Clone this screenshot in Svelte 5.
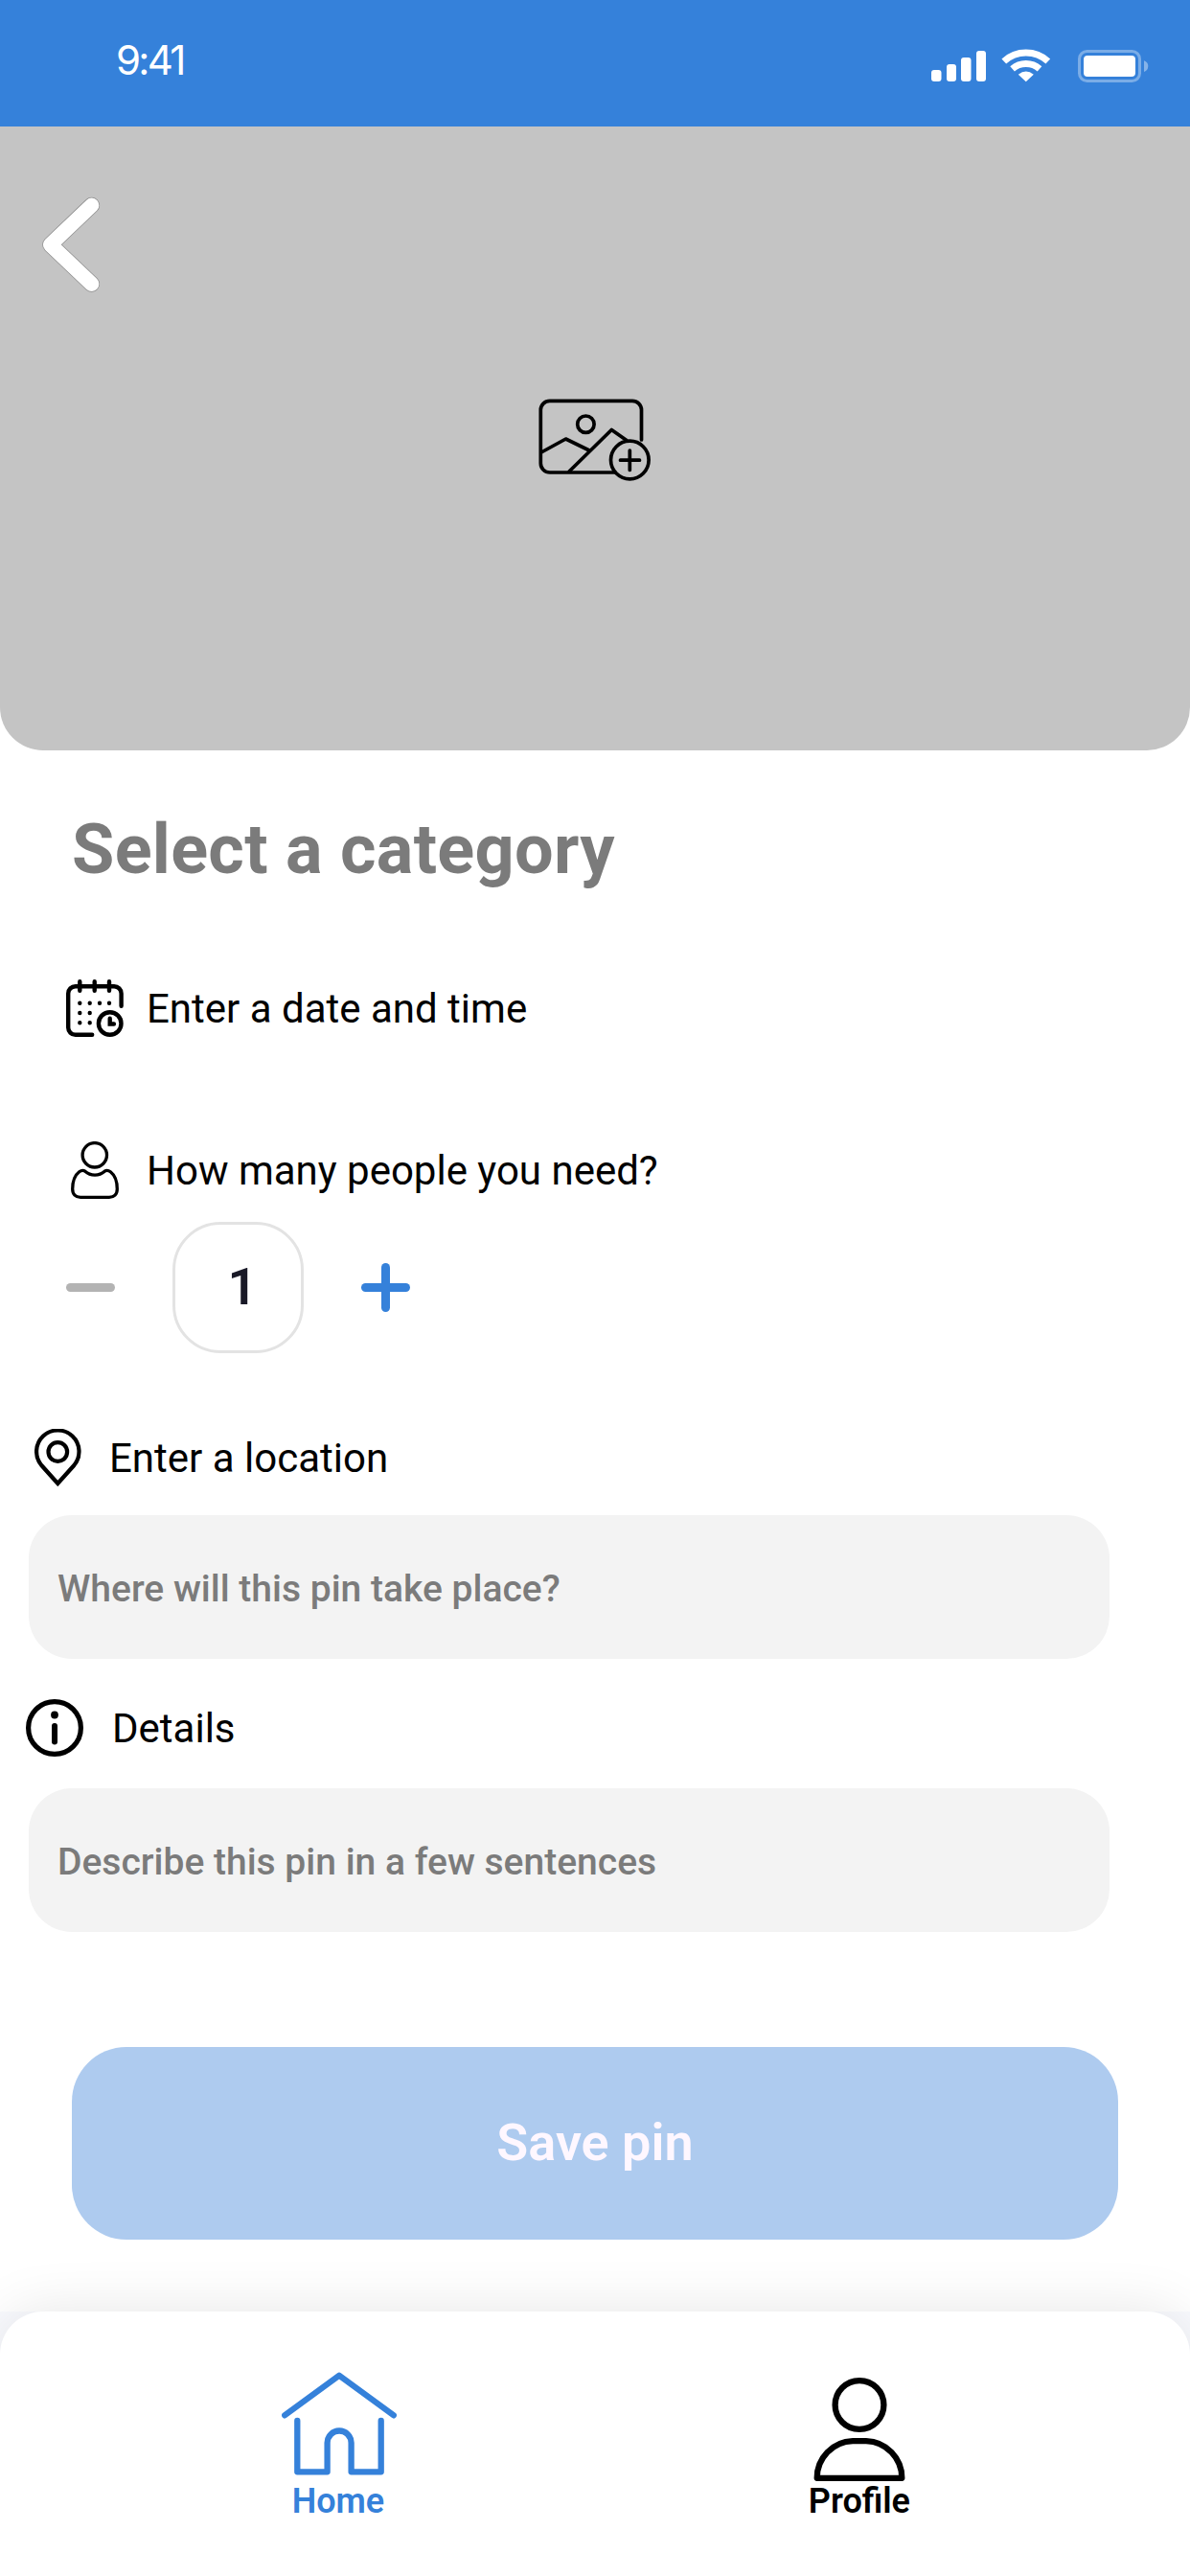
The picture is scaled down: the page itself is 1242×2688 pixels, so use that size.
<script>
  let people = $state(1);
  let place = $state('');
  let details = $state('');
</script>

<main class="screen">
  <header class="status">
    <span class="clock">9:41</span>
    <svg class="signals" viewBox="0 0 242 36" width="242" height="36">
      <g fill="#fff">
        <rect x="0" y="22" width="10.5" height="12" rx="3" />
        <rect x="16" y="16" width="10" height="18" rx="3" />
        <rect x="31" y="9" width="10.5" height="25" rx="3" />
        <rect x="47" y="2" width="10" height="32" rx="3" />
      </g>
      <g fill="none" stroke="#fff" stroke-width="7">
        <path d="M75.800 13A34 34 0 0 1 121.800 13" />
        <path d="M84.600 20.800A21.500 21.500 0 0 1 113 20.800" />
      </g>
      <path d="M90.800 26.800Q98.800 20.400 106.800 26.800L98.800 34.300Z" fill="#fff" />
      <rect x="154.500" y="2.500" width="63" height="31" rx="8" fill="none" stroke="#fff" stroke-opacity=".35" stroke-width="3" />
      <rect x="159" y="7" width="54" height="22" rx="4" fill="#fff" />
      <path d="M222 12.200a6.200 6.200 0 0 1 0 11.800z" fill="#fff" fill-opacity=".4" />
    </svg>
  </header>

  <section class="hero">
    <button class="back" aria-label="Back">
      <svg viewBox="0 0 64 104" width="64" height="104" fill="none" stroke-linecap="round" stroke-linejoin="round">
        <path d="M53.700 11.200L10.600 52.300L53.700 93.300" stroke="#8d8d8d" stroke-width="16.800" />
        <path d="M53.700 11.200L10.600 52.300L53.700 93.300" stroke="#fff" stroke-width="15.400" />
      </svg>
    </button>
    <button class="add-image" aria-label="Add image">
      <svg viewBox="0 0 120 94" width="120" height="94" fill="none" stroke="#000" stroke-width="3.700" stroke-linecap="round" stroke-linejoin="round">
        <path d="M109.500 49V17.800a9.500 9.500 0 0 0-9.500-9.500H13.800a9.500 9.500 0 0 0-9.500 9.500v55.700a9.500 9.500 0 0 0 9.500 9.500H82" />
        <circle cx="51.400" cy="32.700" r="8.700" />
        <path d="M5 62L30.500 48L55 60M34 82L78.300 38.500L94 49.500" />
        <circle cx="97.300" cy="70" r="19.800" />
        <path d="M97.300 60v20.500M87.500 70.200h20" />
      </svg>
    </button>
  </section>

  <form class="form">
    <h1>Select a category</h1>

    <div class="row date">
      <svg viewBox="0 0 60 60" width="60" height="60" fill="none" stroke="#000" stroke-width="4.400" stroke-linecap="round">
        <path d="M27.200 57.800H9.700a7.500 7.500 0 0 1-7.500-7.500V14.700a7.500 7.500 0 0 1 7.500-7.500h40.400a7.500 7.500 0 0 1 7.500 7.500v13.100" />
        <path d="M14.300 2.200v9.600M29.700 2.200v9.600M45 2.200v9.600" />
        <circle cx="45.700" cy="46" r="11.800" />
        <path d="M45.700 40.800v5.700h4.200" />
        <path d="M14.300 24.700h.01M24.700 24.700h.01M35 24.700h.01M45 24.700h.01M14.300 35h.01M24.700 35h.01M14.300 45.300h.01M24.700 45.300h.01" />
      </svg>
      <span>Enter a date and time</span>
    </div>

    <div class="row people">
      <svg viewBox="0 0 50 60" width="50" height="60" fill="none" stroke="#000" stroke-width="3.300" stroke-linejoin="round">
        <circle cx="24.800" cy="14.300" r="12.700" />
        <path d="M14.800 31.200C20.500 36.300 29.500 36.300 35.200 31.200C37 30 39.300 30.300 41.300 31.800C45.700 35.200 48.300 42 48.300 49.800C48.300 55.300 45 58.300 40 58.300H10C5 58.300 1.700 55.300 1.700 49.800C1.700 42 4.300 35.200 8.700 31.800C10.700 30.300 13 30 14.800 31.200Z" />
      </svg>
      <span>How many people you need?</span>
    </div>

    <div class="stepper">
      <button type="button" class="step minus" aria-label="Fewer" onclick={() => (people = Math.max(1, people - 1))}><i></i></button>
      <output>{people}</output>
      <button type="button" class="step plus" aria-label="More" onclick={() => (people += 1)}><i></i><i class="upright"></i></button>
    </div>

    <div class="row location">
      <svg viewBox="0 0 49 60" width="49" height="60" fill="none" stroke="#000" stroke-width="4.200">
        <path d="M24.300 57L7.300 38A22.200 22.200 0 1 1 41.300 38Z" />
        <circle cx="24.300" cy="24" r="9.800" />
      </svg>
      <span>Enter a location</span>
    </div>
    <input bind:value={place} placeholder="Where will this pin take place?" />

    <div class="row details">
      <svg viewBox="0 0 60 60" width="60" height="60" fill="none" stroke="#000" stroke-linecap="round">
        <circle cx="30" cy="30" r="27.400" stroke-width="5.200" />
        <path d="M30 28v16.500" stroke-width="6" />
        <circle cx="30" cy="16.500" r="3.900" fill="#000" stroke="none" />
      </svg>
      <span>Details</span>
    </div>
    <input class="describe" bind:value={details} placeholder="Describe this pin in a few sentences" />

    <button type="button" class="save">Save pin</button>
  </form>

  <nav>
    <div class="tabs">
      <a class="home" href="#home">
        <svg viewBox="0 0 120 116" width="120" height="116" fill="none" stroke="#3581da" stroke-width="6.300" stroke-linecap="round" stroke-linejoin="round">
          <path d="M3.200 47.300L60 5.800L116.800 47.300" />
          <path d="M16.300 53V106.300H47.600V76A12.500 12.500 0 0 1 72.600 76V106.300H103.700V53" />
        </svg>
        <span>Home</span>
      </a>
      <a class="profile" href="#profile">
        <svg viewBox="0 0 98 116" width="98" height="116" fill="none" stroke="#000" stroke-width="6.300" stroke-linejoin="round">
          <circle cx="49" cy="36.500" r="25.400" />
          <path d="M4.700 112.800A38.500 38.500 0 0 1 42 74.200H56A38.500 38.500 0 0 1 93.300 112.800Z" />
        </svg>
        <span>Profile</span>
      </a>
    </div>
  </nav>
</main>

<style>
  :global(body) {
    margin: 0;
    background: #fff;
  }

  .screen {
    width: 1242px;
    height: 2688px;
    display: flex;
    flex-direction: column;
    overflow: hidden;
    background: #fff;
    color: #000;
    font-family: Roboto, sans-serif;
  }

  button {
    padding: 0;
    border: 0;
    background: none;
    font-family: inherit;
  }

  svg {
    display: block;
    flex: none;
  }

  .status {
    box-sizing: border-box;
    height: 132px;
    flex: none;
    display: flex;
    justify-content: space-between;
    align-items: flex-start;
    padding: 37px 28px 0 121px;
    background: #3581da;
  }

  .clock {
    color: #fff;
    font: 400 42px/52px Inter, sans-serif;
    letter-spacing: -2.700px;
  }

  .signals {
    margin-top: 14px;
  }

  .hero {
    box-sizing: border-box;
    height: 651px;
    flex: none;
    display: flex;
    align-items: flex-start;
    background: #c4c4c4;
    border-radius: 0 0 45px 45px;
  }

  .back {
    margin: 71px 0 0 42px;
  }

  .add-image {
    margin: 278px 0 0 454px;
  }

  .form {
    flex: none;
    height: 1629px;
    display: flex;
    flex-direction: column;
    align-items: flex-start;
  }

  h1 {
    margin: 62px 0 0 75px;
    color: #7b7b7b;
    font-size: 72px;
    font-weight: 700;
    letter-spacing: 0.300px;
    line-height: 84px;
  }

  .row {
    display: flex;
    align-items: center;
    height: 60px;
    font-size: 42px;
    line-height: 50px;
    white-space: nowrap;
  }

  .row span {
    padding-top: 2px;
  }

  .date {
    margin: 93px 0 0 69px;
    gap: 24px;
  }

  .people {
    margin: 109px 0 0 74px;
    gap: 29px;
  }

  .location {
    margin: 79px 0 0 36px;
    gap: 29px;
  }

  .details {
    margin: 42px 0 0 27px;
    gap: 30px;
  }

  .stepper {
    display: flex;
    align-items: center;
    gap: 60px;
    margin: 24px 0 0 69px;
  }

  .step {
    width: 51px;
    height: 51px;
    display: grid;
    place-items: center;
  }

  .step i {
    grid-area: 1 / 1;
    width: 51px;
    height: 9px;
    border-radius: 4.500px;
    background: #b3b3b3;
  }

  .step.plus i {
    background: #3581da;
  }

  .step.plus .upright {
    width: 9px;
    height: 51px;
  }

  output {
    box-sizing: border-box;
    width: 137px;
    height: 137px;
    padding-left: 9px;
    border: 3px solid #e3e3e3;
    border-radius: 50px;
    color: #191927;
    font-size: 54px;
    font-weight: 600;
    line-height: 130px;
    text-align: center;
  }

  input {
    box-sizing: border-box;
    width: 1128px;
    height: 150px;
    margin: 30px 0 0 30px;
    padding: 4px 30px 0;
    border: 0;
    border-radius: 45px;
    background: #f3f3f3;
    font: 500 39px Roboto, sans-serif;
  }

  .describe {
    margin-top: 33px;
  }

  input::placeholder {
    color: #7b7b7b;
    opacity: 1;
  }

  .save {
    width: 1092px;
    height: 201px;
    margin: 120px 0 0 75px;
    padding-bottom: 2px;
    border-radius: 57px;
    background: #aecbef;
    color: #fef7ff;
    font-size: 54px;
    font-weight: 600;
  }

  nav {
    height: 276px;
    flex: none;
    background: #f9fafe;
  }

  .tabs {
    box-sizing: border-box;
    height: 276px;
    display: flex;
    justify-content: space-between;
    padding: 61px 292px 0 294px;
    border-radius: 45px 45px 0 0;
    background: #fff;
    box-shadow: 0 0 60px rgba(0, 0, 0, 0.1);
  }

  nav a {
    display: flex;
    flex-direction: column;
    align-items: center;
    color: #000;
    font-size: 36px;
    font-weight: 600;
    line-height: 42px;
    text-decoration: none;
  }

  .home {
    color: #3581da;
  }

  .home span {
    padding-right: 2px;
  }
</style>
